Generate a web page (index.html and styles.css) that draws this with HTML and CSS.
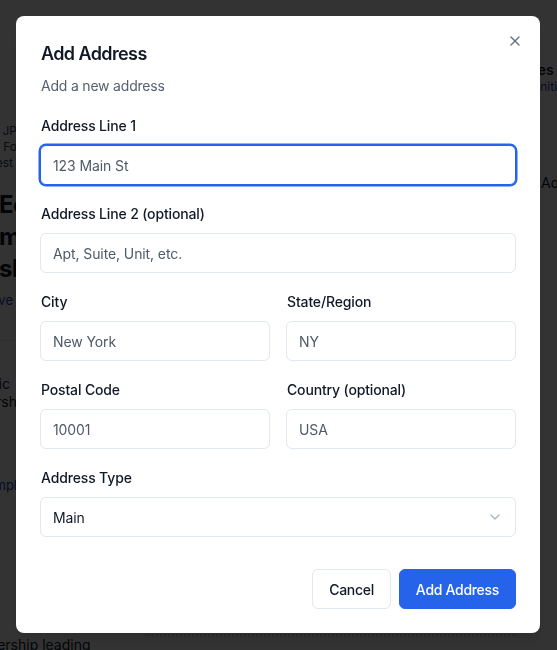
FILE: index.html
```html
<!DOCTYPE html>
<html lang="en">
<head>
    <meta charset="UTF-8">
    <meta name="viewport" content="width=device-width, initial-scale=1.0">
    <title>Add Address</title>
    <link rel="stylesheet" href="styles.css">
</head>
<body>
    <div class="page">
        <div class="page-main">
            <div class="meta"><span>Managed by JP</span></div>
            <div class="meta"><span>Inc. Fo</span></div>
            <div class="meta edge-13"><span>Latest</span></div>
            <h1 class="page-title">Economic<br>mobility and<br>slowdown outlook</h1>
            <div class="page-link edge-13"><span>Save</span></div>
            <hr class="page-rule">
            <div class="page-text first edge-10"><span>Strategic</span></div>
            <div class="page-text"><span>Partnersh</span></div>
            <div class="page-link small"><span>Sampl</span></div>
            <div class="page-bottom">
                <span class="bottom-text">Partnership leading</span>
                <span class="dots"></span>
            </div>
        </div>
        <div class="page-side">
            <div class="side-title">Sales</div>
            <div class="side-link">Initiatives</div>
            <div class="side-add">Add</div>
        </div>
    </div>

    <div class="overlay">
        <div class="dialog" role="dialog" aria-labelledby="dialog-title">
            <button class="close" aria-label="Close">
                <svg width="16" height="16" viewBox="0 0 24 24" fill="none" stroke="currentColor" stroke-width="2" stroke-linecap="round" stroke-linejoin="round"><path d="M18 6 6 18"/><path d="m6 6 12 12"/></svg>
            </button>

            <div class="dialog-header">
                <h2 id="dialog-title">Add Address</h2>
                <p>Add a new address</p>
            </div>

            <form class="form">
                <div class="field">
                    <label for="line1">Address Line 1</label>
                    <input id="line1" class="input focused" placeholder="123 Main St">
                </div>
                <div class="field">
                    <label for="line2">Address Line 2 (optional)</label>
                    <input id="line2" class="input" placeholder="Apt, Suite, Unit, etc.">
                </div>
                <div class="row">
                    <div class="field">
                        <label for="city">City</label>
                        <input id="city" class="input" placeholder="New York">
                    </div>
                    <div class="field">
                        <label for="state">State/Region</label>
                        <input id="state" class="input" placeholder="NY">
                    </div>
                </div>
                <div class="row">
                    <div class="field">
                        <label for="postal">Postal Code</label>
                        <input id="postal" class="input" placeholder="10001">
                    </div>
                    <div class="field">
                        <label for="country">Country (optional)</label>
                        <input id="country" class="input" placeholder="USA">
                    </div>
                </div>
                <div class="field">
                    <label>Address Type</label>
                    <div class="select">
                        <span>Main</span>
                        <svg width="16" height="16" viewBox="0 0 24 24" fill="none" stroke="currentColor" stroke-width="2" stroke-linecap="round" stroke-linejoin="round"><path d="m6 9 6 6 6-6"/></svg>
                    </div>
                </div>
            </form>

            <div class="dialog-footer">
                <button class="btn btn-outline">Cancel</button>
                <button class="btn btn-primary">Add Address</button>
            </div>
        </div>
    </div>
</body>
</html>
```

FILE: styles.css
```css
body {
    margin: 0;
    font-family: Inter, "Noto Sans", sans-serif;
    background-color: #fff;
    color: #0f172a;
    overflow: hidden;
    height: 650px;
}

/* Page behind the dialog (only its edges show) */
.page {
    display: flex;
}

.page-main {
    width: 517px;
    flex-shrink: 0;
    padding-top: 123px;
}

/* lines end near the dialog edge, the rest runs off to the left */
.meta,
.page-link,
.page-text {
    display: flex;
    justify-content: flex-end;
    width: 17px;
    white-space: nowrap;
}

.edge-13 { width: 13px; }
.edge-10 { width: 10px; }

.meta {
    font-size: 12px;
    line-height: 16px;
    color: #334155;
}

.page-title {
    margin: 18px 0 0 -1px;
    font-size: 24px;
    line-height: 32px;
    font-weight: 700;
    color: #0f172a;
    white-space: nowrap;
    letter-spacing: -0.5px;
}

.page-link {
    margin-top: 5px;
    font-size: 13px;
    line-height: 20px;
    color: #1e40af;
}

.page-link.small {
    margin-top: 66px;
    line-height: 16px;
}

.page-rule {
    margin: 30px 0 0;
    border: 0;
    border-top: 1px solid #e2e8f0;
}

.page-text {
    font-size: 14px;
    line-height: 18px;
    color: #0f172a;
}

.page-text.first {
    margin-top: 34px;
}

.page-bottom {
    margin-top: 141px;
    display: flex;
    align-items: flex-start;
    white-space: nowrap;
}

.bottom-text {
    margin-left: -38px;
    padding-top: 2px;
    font-size: 14px;
    line-height: 18px;
}

.dots {
    flex: 1;
    margin-left: 54px;
    border-top: 2px dotted #cbd5e1;
}

.page-side {
    padding-top: 61px;
    white-space: nowrap;
}

.side-title {
    font-size: 14px;
    line-height: 18px;
    font-weight: 600;
}

.side-link {
    font-size: 12px;
    line-height: 16px;
    color: #1e40af;
    margin-left: 20px;
}

.side-add {
    margin-top: 79px;
    font-size: 14px;
    line-height: 18px;
    margin-left: 24px;
}

/* Dialog */
.overlay {
    position: fixed;
    inset: 0;
    padding: 16px;
    background-color: rgba(0, 0, 0, 0.8);
    display: flex;
    justify-content: flex-start;
    align-items: flex-start;
}

.dialog {
    position: relative;
    width: 524px;
    box-sizing: border-box;
    padding: 24px;
    background-color: #fff;
    border-radius: 8px;
    box-shadow: 0 10px 15px -3px rgba(0, 0, 0, 0.1), 0 4px 6px -4px rgba(0, 0, 0, 0.1);
}

.close {
    position: absolute;
    top: 17px;
    right: 17px;
    padding: 0;
    border: 0;
    background: none;
    color: #334155;
    opacity: 0.75;
    display: flex;
}

.dialog-header {
    padding-left: 1px;
}

.dialog-header h2 {
    margin: 0;
    font-size: 18px;
    line-height: 28px;
    font-weight: 600;
    color: #111827;
    letter-spacing: -0.6px;
}

.dialog-header p {
    margin: 8px 0 0;
    font-size: 14px;
    line-height: 20px;
    color: #556070;
    letter-spacing: -0.2px;
}

.form {
    margin-top: 20px;
    display: flex;
    flex-direction: column;
    gap: 19px;
}

.row {
    display: grid;
    grid-template-columns: 1fr 1fr;
    gap: 16px;
}

.field {
    display: flex;
    flex-direction: column;
    gap: 9px;
}

.field label {
    padding-left: 1px;
    font-size: 14px;
    line-height: 20px;
    font-weight: 500;
    color: #111827;
    letter-spacing: -0.15px;
}

.input,
.select {
    height: 40px;
    box-sizing: border-box;
    width: 100%;
    padding: 0 12px;
    border: 1px solid #e2e8f0;
    border-radius: 6px;
    font-family: inherit;
    font-size: 14px;
    letter-spacing: -0.1px;
    color: #111827;
    background-color: #fff;
    outline: none;
}

.input::placeholder {
    color: #4f5968;
}

.input.focused {
    border-color: #2563eb;
    box-shadow: 0 0 0 1.5px #2563eb;
}

.select {
    display: flex;
    align-items: center;
    justify-content: space-between;
}

.select svg {
    color: #94a3b8;
    opacity: 0.8;
}

.dialog-footer {
    margin-top: 32px;
    display: flex;
    justify-content: flex-end;
    gap: 8px;
}

.btn {
    height: 40px;
    padding: 0 16px;
    border-radius: 6px;
    font-family: inherit;
    font-size: 14px;
    font-weight: 500;
    letter-spacing: -0.3px;
    cursor: pointer;
}

.btn-outline {
    background-color: #fff;
    border: 1px solid #e2e8f0;
    color: #111827;
}

.btn-primary {
    background-color: #2563eb;
    border: 1px solid #2563eb;
    color: #fff;
}
```
